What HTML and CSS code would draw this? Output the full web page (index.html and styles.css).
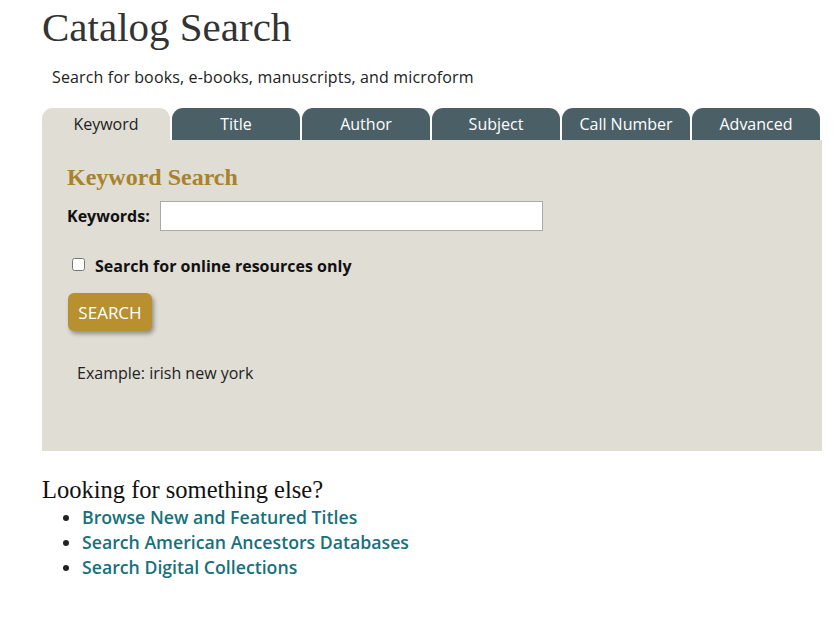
FILE: index.html
```html
<!DOCTYPE html>
<html lang="en">
<head>
    <meta charset="UTF-8">
    <title>Catalog Search</title>
    <link rel="stylesheet" href="styles.css">
</head>
<body>
    <div class="page">
        <h1 class="page-title">Catalog Search</h1>
        <p class="intro">Search for books, e-books, manuscripts, and microform</p>

        <div class="tabs">
            <div class="tab active">Keyword</div>
            <div class="tab">Title</div>
            <div class="tab">Author</div>
            <div class="tab">Subject</div>
            <div class="tab">Call Number</div>
            <div class="tab">Advanced</div>
        </div>

        <div class="panel">
            <h2 class="panel-title">Keyword Search</h2>
            <form class="search-form">
                <div class="field-row">
                    <label for="keywords">Keywords:</label>
                    <input type="text" id="keywords" name="keywords">
                </div>
                <div class="check-row">
                    <input type="checkbox" id="online" name="online">
                    <label for="online">Search for online resources only</label>
                </div>
                <button type="submit" class="search-btn">SEARCH</button>
            </form>
            <p class="example">Example: irish new york</p>
        </div>

        <h3 class="else-title">Looking for something else?</h3>
        <ul class="else-links">
            <li><a href="#">Browse New and Featured Titles</a></li>
            <li><a href="#">Search American Ancestors Databases</a></li>
            <li><a href="#">Search Digital Collections</a></li>
        </ul>
    </div>
</body>
</html>
```

FILE: styles.css
```css
body {
    margin: 0;
    padding: 0;
    background: #fff;
    font-family: 'Open Sans', sans-serif;
    font-size: 16px;
    color: #222;
}
.page {
    margin-left: 42px;
    width: 780px;
}
.page-title {
    font-family: 'Liberation Serif', serif;
    font-weight: normal;
    font-size: 41px;
    line-height: 50px;
    color: #333;
    margin: 2px 0 0 0;
}
.intro {
    margin: 13px 0 0 10px;
    line-height: 24px;
    letter-spacing: 0.15px;
    color: #222;
}
.tabs {
    display: flex;
    gap: 2px;
    margin-top: 19px;
}
.tab {
    width: 128px;
    height: 32px;
    line-height: 32px;
    text-align: center;
    background: #4b5f67;
    color: #fff;
    border-radius: 11px 11px 0 0;
}
.tab.active {
    background: #e0ddd5;
    color: #222;
}
.panel {
    background: #e0ddd5;
    height: 311px;
    padding: 22px 25px 0 25px;
    box-sizing: border-box;
}
.panel-title {
    font-family: 'Liberation Serif', serif;
    font-size: 24px;
    line-height: 30px;
    color: #a8822c;
    margin: 0;
}
.field-row {
    display: flex;
    align-items: center;
    margin-top: 9px;
}
.field-row label {
    font-weight: bold;
    color: #111;
    margin-right: 10px;
}
.field-row input {
    width: 383px;
    height: 30px;
    box-sizing: border-box;
    border: 1px solid #aaa;
    background: #fff;
    margin: 0;
}
.check-row {
    display: flex;
    align-items: center;
    margin-top: 24px;
    margin-left: 5px;
}
.check-row input {
    width: 13px;
    height: 13px;
    margin: 0 10px 4px 0;
}
.check-row label {
    font-weight: bold;
    color: #111;
}
.search-btn {
    margin-top: 16px;
    margin-left: 1px;
    width: 84px;
    height: 38px;
    background: #b8902f;
    color: #fff;
    border: none;
    border-radius: 6px;
    font-family: 'Open Sans', sans-serif;
    font-size: 17px;
    box-shadow: 2px 3px 4px rgba(0, 0, 0, 0.35);
    cursor: pointer;
}
.example {
    margin: 30px 0 0 10px;
    line-height: 24px;
    color: #222;
}
.else-title {
    font-family: 'Liberation Serif', serif;
    font-weight: normal;
    font-size: 24.5px;
    line-height: 30px;
    color: #111;
    margin: 24px 0 0 0;
}
.else-links {
    margin: 0;
    padding-left: 40px;
    font-size: 17.7px;
    line-height: 25px;
}
.else-links a {
    color: #17707b;
    font-weight: 600;
    text-decoration: none;
}
```
